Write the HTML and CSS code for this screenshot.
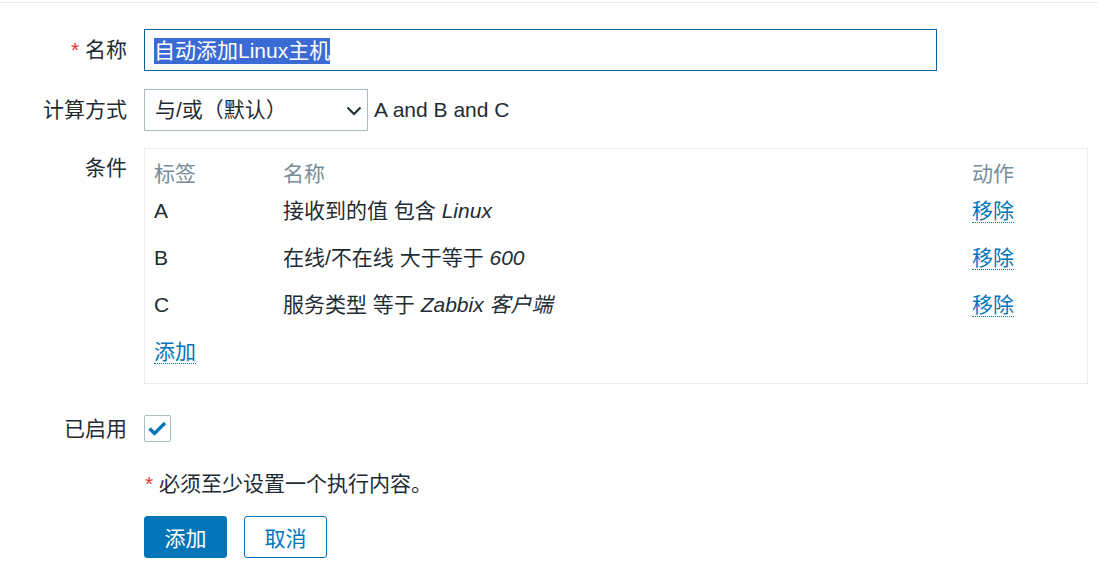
FILE: index.html
```html
<!DOCTYPE html>
<html lang="zh-CN">

<head>
    <meta charset="UTF-8">
    <meta name="viewport" content="width=device-width, initial-scale=1.0">
    <title>自动发现动作</title>

    <link rel="stylesheet" href="styles.css">
</head>

<body>
    <div class="topline"></div>
    <main class="form">
        <div class="row row-name">
            <div class="label"><span class="req">*</span> 名称</div>
            <div class="field">
                <div class="textbox"><span class="sel">自动添加Linux主机</span></div>
            </div>
        </div>

        <div class="row row-calc">
            <div class="label">计算方式</div>
            <div class="field field-inline">
                <div class="select">
                    <span>与/或（默认）</span>
                    <svg class="chevron" width="16" height="10" viewBox="0 0 16 10">
                        <path d="M1.5 1.5 L8 8 L14.5 1.5" fill="none" stroke="#1f2c33" stroke-width="2"/>
                    </svg>
                </div>
                <span class="expr">A and B and C</span>
            </div>
        </div>

        <div class="row row-cond">
            <div class="label">条件</div>
            <div class="field">
                <div class="cond-box">
                    <table class="cond-table">
                        <thead>
                            <tr>
                                <th class="col-tag">标签</th>
                                <th>名称</th>
                                <th class="col-act">动作</th>
                            </tr>
                        </thead>
                        <tbody>
                            <tr>
                                <td>A</td>
                                <td>接收到的值 包含 <em>Linux</em></td>
                                <td><a class="link">移除</a></td>
                            </tr>
                            <tr>
                                <td>B</td>
                                <td>在线/不在线 大于等于 <em>600</em></td>
                                <td><a class="link">移除</a></td>
                            </tr>
                            <tr>
                                <td>C</td>
                                <td>服务类型 等于 <em>Zabbix 客户端</em></td>
                                <td><a class="link">移除</a></td>
                            </tr>
                            <tr>
                                <td colspan="3"><a class="link">添加</a></td>
                            </tr>
                        </tbody>
                    </table>
                </div>
            </div>
        </div>

        <div class="row row-enabled">
            <div class="label">已启用</div>
            <div class="field">
                <span class="checkbox">
                    <svg width="25" height="25" viewBox="0 0 25 25">
                        <path d="M4.5 12.5 L9.5 17.5 L20 7" fill="none" stroke="#0275b8" stroke-width="3.2"/>
                    </svg>
                </span>
            </div>
        </div>

        <div class="row row-note">
            <div class="label"></div>
            <div class="field"><span class="req">*</span> 必须至少设置一个执行内容。</div>
        </div>

        <div class="row row-buttons">
            <div class="label"></div>
            <div class="field field-inline">
                <button class="btn btn-primary">添加</button>
                <button class="btn btn-alt">取消</button>
            </div>
        </div>
    </main>
</body>

</html>
```

FILE: styles.css
```css
html,
body {
    padding: 0;
    margin: 0;
}

* {
    box-sizing: border-box;
}

body {
    background-color: #ffffff;
    color: #1f2c33;
    font-family: "Liberation Sans", Arial, "Noto Sans CJK SC", sans-serif;
    font-size: 21px;
    line-height: 24px;
}

.topline {
    margin-top: 2px;
    height: 1px;
    background-color: #ebebeb;
}

.form {
    display: flex;
    flex-direction: column;
    padding-right: 10px;
}

.row {
    display: flex;
    align-items: center;
}

.label {
    flex: none;
    width: 127px;
    margin-right: 17px;
    text-align: right;
}

.field {
    flex: 1;
    min-width: 0;
}

.field-inline {
    display: flex;
    align-items: center;
}

.req {
    color: #e33734;
}

/* name */
.row-name {
    margin-top: 26px;
}

.textbox {
    width: 793px;
    height: 42px;
    border: 1px solid #0c65a3;
    padding: 8px 9px;
    white-space: nowrap;
}

.sel {
    background-color: #3a6bd5;
    color: #ffffff;
    display: inline-block;
    line-height: 26px;
}

/* calc */
.row-calc {
    margin-top: 18px;
}

.select {
    width: 224px;
    height: 42px;
    border: 1px solid #acbbc2;
    display: flex;
    align-items: center;
    justify-content: space-between;
    padding: 0 5px 0 10px;
}

.chevron {
    margin-top: 1px;
}

.expr {
    margin-left: 6px;
}

/* conditions */
.row-cond {
    margin-top: 17px;
    align-items: flex-start;
}

.row-cond .label {
    padding-top: 8px;
}

.cond-box {
    border: 1px solid #ebeef0;
    padding: 0 9px 8px;
    height: 236px;
}

.cond-table {
    width: 100%;
    border-collapse: collapse;
}

.cond-table th {
    font-weight: normal;
    color: #768d99;
    text-align: left;
    padding: 12px 0 1px;
    height: 38px;
}

.cond-table td {
    height: 47px;
    padding: 0;
}

.col-tag {
    width: 129px;
}

.col-act {
    width: 106px;
}

.cond-table em {
    font-style: italic;
}

.link {
    color: #0275b8;
    border-bottom: 1px dotted #0275b8;
    cursor: pointer;
}

/* enabled */
.row-enabled {
    margin-top: 31px;
}

.label,
.field {
    line-height: 24px;
}

.checkbox {
    display: block;
    width: 27px;
    height: 27px;
    border: 1px solid #acbbc2;
    border-radius: 2px;
}

.checkbox svg {
    display: block;
}

/* note */
.row-note {
    margin-top: 30px;
}

.row-note .field {
    padding-left: 1px;
}

/* buttons */
.row-buttons {
    margin-top: 20px;
}

.btn {
    height: 42px;
    width: 83px;
    border-radius: 3px;
    font-size: 21px;
    font-family: inherit;
    padding: 0;
    cursor: pointer;
}

.btn-primary {
    background-color: #0275b8;
    border: 1px solid #0275b8;
    color: #ffffff;
}

.btn-alt {
    margin-left: 17px;
    background-color: #ffffff;
    border: 1px solid #0275b8;
    color: #0275b8;
}
```
